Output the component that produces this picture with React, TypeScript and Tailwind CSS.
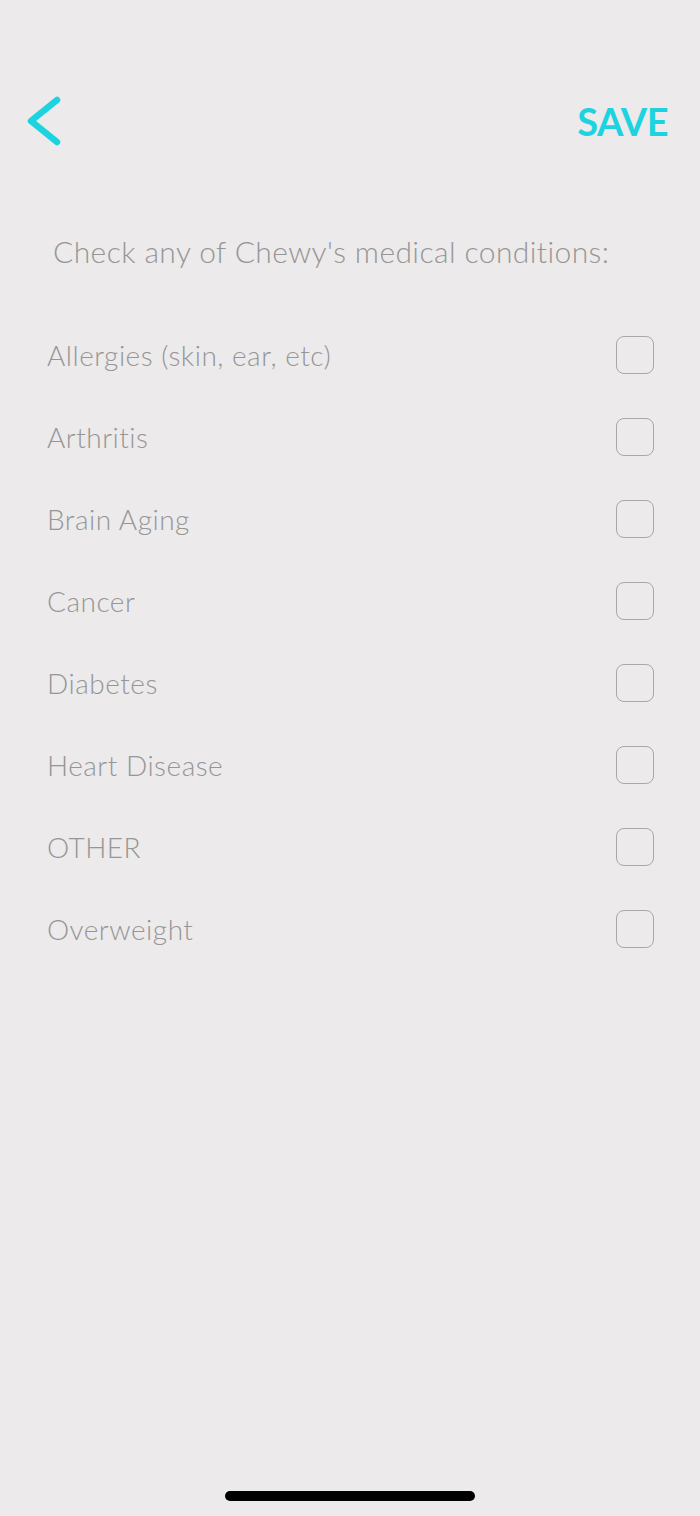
import React from 'react';

const conditions = [
  'Allergies (skin, ear, etc)',
  'Arthritis',
  'Brain Aging',
  'Cancer',
  'Diabetes',
  'Heart Disease',
  'OTHER',
  'Overweight',
];

const App = () => {
  return (
    <div className="flex min-h-screen w-full flex-col bg-[#eceaeb] pt-[80px] font-['Lato',sans-serif]">
      {/* Header */}
      <div className="flex h-[82px] items-center justify-between pr-[32px]">
        <button className="ml-[24px]" aria-label="Back">
          <svg width="40" height="50" viewBox="0 0 40 50" fill="none">
            <path
              d="M33 4 L7 25 L33 46"
              stroke="#1dd3df"
              strokeWidth="6.5"
              strokeLinecap="round"
              strokeLinejoin="round"
            />
          </svg>
        </button>
        <button className="text-[38px] leading-none font-bold tracking-[-0.5px] text-[#1dd3df]">SAVE</button>
      </div>

      {/* Prompt */}
      <div className="mt-[69px] flex h-[40px] items-center pl-[53px] text-[30px] font-light tracking-[0.4px] text-[#969696]">
        Check any of Chewy's medical conditions:
      </div>

      {/* List */}
      <ul className="mt-[43px]">
        {conditions.map((c) => (
          <li key={c} className="flex h-[82px] items-center justify-between pl-[47px] pr-[46px]">
            <span className="text-[28px] leading-none font-light tracking-[0.5px] text-[#969696]">{c}</span>
            <span className="h-[38px] w-[38px] rounded-[8px] border-[1.5px] border-[#a8a8a8]" />
          </li>
        ))}
      </ul>

      {/* Home indicator */}
      <div className="mt-auto flex justify-center pb-[15px]">
        <div className="h-[10px] w-[250px] rounded-full bg-black" />
      </div>
    </div>
  );
};

export default App;
